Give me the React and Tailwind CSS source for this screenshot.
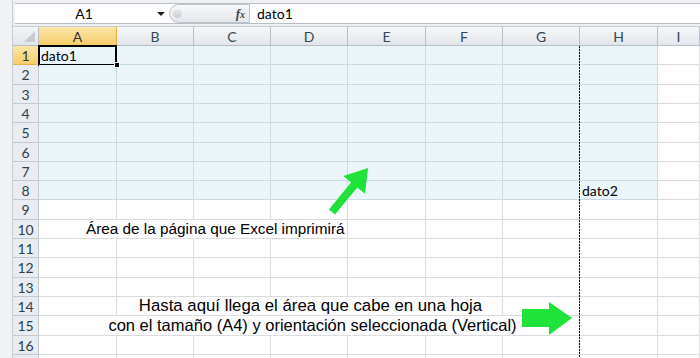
const COLS = ['A', 'B', 'C', 'D', 'E', 'F', 'G', 'H', 'I']
const ROWS = Array.from({ length: 17 }, (_, i) => i + 1)

const CELL_FONT = { fontFamily: 'Lato, "Open Sans", sans-serif' }
const NOTE_FONT = { fontFamily: '"Liberation Sans", Arial, sans-serif' }

function isPrintArea(row, colIndex) {
  return row <= 8 && colIndex <= 7
}

function Cell({ row, colIndex, children }) {
  const blue = isPrintArea(row, colIndex)
  return (
    <div
      className={`relative flex items-center overflow-visible border-r border-b px-[2px] text-[14px] text-black ${
        blue ? 'border-[#c9dce6] bg-[#ebf6fb]' : 'border-[#dadcde] bg-white'
      }`}
      style={CELL_FONT}
    >
      {children}
    </div>
  )
}

function NoteCell({ className, children }) {
  return (
    <div
      className={`flex items-center whitespace-nowrap border-b border-r border-[#dadcde] bg-white text-black ${className}`}
      style={NOTE_FONT}
    >
      {children}
    </div>
  )
}

function RowHeader({ row }) {
  const active = row === 1
  return (
    <div
      className={`flex items-center justify-center border-b border-r text-[14px] ${
        active
          ? 'border-[#e2b24a] bg-gradient-to-b from-[#fbe6a6] to-[#f6cd6a] text-[#333]'
          : 'border-[#c3c9d1] bg-[#e9ecf0] text-[#2c3e52]'
      }`}
      style={CELL_FONT}
    >
      {row < 17 ? row : null}
    </div>
  )
}

function renderRow(row) {
  const cells = [<RowHeader key={`h${row}`} row={row} />]

  if (row === 10) {
    cells.push(
      <NoteCell key="n10" className="col-span-4 pl-[47px] text-[15.3px]">
        Área de la página que Excel imprimirá
      </NoteCell>,
    )
    for (let c = 4; c < 9; c++) cells.push(<Cell key={`${row}-${c}`} row={row} colIndex={c} />)
    return cells
  }

  if (row === 14) {
    cells.push(<Cell key="14-0" row={row} colIndex={0} />)
    cells.push(
      <NoteCell key="n14" className="col-span-5 justify-center pl-[2px] text-[16.8px]">
        Hasta aquí llega el área que cabe en una hoja
      </NoteCell>,
    )
    for (let c = 6; c < 9; c++) cells.push(<Cell key={`${row}-${c}`} row={row} colIndex={c} />)
    return cells
  }

  if (row === 15) {
    cells.push(
      <NoteCell key="n15" className="col-span-7 justify-center pl-[7px] text-[16.5px]">
        con el tamaño (A4) y orientación seleccionada (Vertical)
      </NoteCell>,
    )
    for (let c = 7; c < 9; c++) cells.push(<Cell key={`${row}-${c}`} row={row} colIndex={c} />)
    return cells
  }

  COLS.forEach((_, c) => {
    let content = null
    if (row === 1 && c === 0) {
      content = (
        <>
          dato1
          <span className="absolute -left-px -top-px h-[21px] w-[79px] border-2 border-black" />
          <span className="absolute right-[-4px] bottom-[-4px] z-10 h-[6px] w-[6px] border border-white bg-black" />
        </>
      )
    }
    if (row === 8 && c === 7) content = 'dato2'
    cells.push(
      <Cell key={`${row}-${c}`} row={row} colIndex={c}>
        {content}
      </Cell>,
    )
  })
  return cells
}

function FormulaBar() {
  return (
    <div className="h-[27px] shrink-0 border-b border-[#c7ccd3] bg-[#eef0f3] pl-[2px] pt-[3px]">
      <div className="flex h-[21px] items-center border-y border-[#b9bfc7] bg-white">
        <div className="w-[138px] text-center text-[14px] text-black" style={CELL_FONT}>
          A1
        </div>
        <div className="flex w-[16px] items-center justify-center">
          <span className="h-0 w-0 border-x-[4px] border-t-[4px] border-x-transparent border-t-[#222]" />
        </div>
        <div className="flex h-[19px] w-[81px] items-center justify-between rounded-l-[10px] border border-[#bcc2ca] bg-gradient-to-b from-[#f7f8f9] to-[#e4e7eb] pl-[3px] pr-[4px]">
          <span className="h-[9px] w-[9px] rounded-full bg-gradient-to-b from-[#e8eaed] to-[#c9cdd2]" />
          <span
            className="text-[13px] font-bold italic text-[#444]"
            style={{ fontFamily: '"Liberation Serif", serif' }}
          >
            f<span className="text-[10px]">x</span>
          </span>
        </div>
        <div className="pl-[7px] text-[14px] text-black" style={CELL_FONT}>
          dato1
        </div>
      </div>
    </div>
  )
}

function Overlays() {
  return (
    <svg className="pointer-events-none absolute left-0 top-0 h-[358px] w-[700px]" viewBox="0 0 700 358">
      <line x1="579.5" y1="46" x2="579.5" y2="358" stroke="#111" strokeWidth="1" strokeDasharray="2 1" />
      <polygon
        transform="translate(332 212) rotate(-50.7)"
        points="0,-4 35,-4 35,-14 57,0 35,14 35,4 0,4"
        fill="#1fe33a"
      />
      <polygon points="522,309 549,309 549,302 572,318 549,335 549,327 522,327" fill="#1fe33a" />
    </svg>
  )
}

export default function App() {
  return (
    <div className="relative flex h-[358px] w-[700px] overflow-hidden bg-[#eef0f3]">
      <div className="w-[13px] shrink-0 border-r border-[#c9cdd2] bg-[#f1f2f4]" />
      <div className="flex min-w-0 flex-1 flex-col">
        <FormulaBar />
        <div className="grid grid-cols-[26px_78px_77px_77px_77px_78px_77px_77px_78px_1fr] grid-rows-[19px_19px_20px_19px_19px_20px_19px_19px_19px_20px_19px_19px_20px_19px_19px_20px_19px_20px]">
          <div className="relative border-b border-r border-[#b7bec7] bg-gradient-to-b from-[#f4f6f8] to-[#e2e6eb]">
            <span className="absolute bottom-[3px] right-[3px] h-0 w-0 border-b-[11px] border-l-[11px] border-b-[#c8ccd1] border-l-transparent" />
          </div>
          {COLS.map((col) => (
            <div
              key={col}
              className={`flex items-center justify-center border-b border-r text-[14px] ${
                col === 'A'
                  ? 'border-[#e0ae45] bg-gradient-to-b from-[#fbe6a6] to-[#f6cd6a] text-[#333]'
                  : 'border-[#b7bec7] bg-gradient-to-b from-[#f6f7f9] to-[#e2e6eb] text-[#34475b]'
              }`}
              style={CELL_FONT}
            >
              {col}
            </div>
          ))}
          {ROWS.map((row) => renderRow(row))}
        </div>
      </div>
      <Overlays />
    </div>
  )
}
